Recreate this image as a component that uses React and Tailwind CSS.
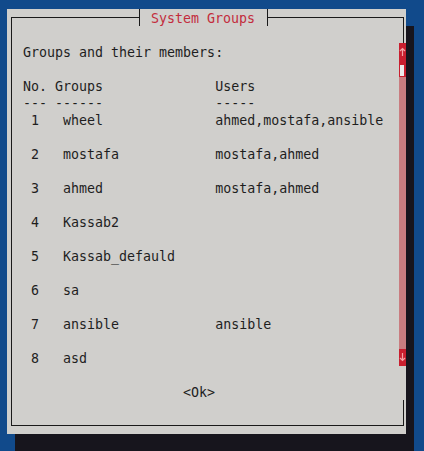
import React from "react";

const GROUPS = [
    { n: 1, name: "wheel", users: "ahmed,mostafa,ansible" },
    { n: 2, name: "mostafa", users: "mostafa,ahmed" },
    { n: 3, name: "ahmed", users: "mostafa,ahmed" },
    { n: 4, name: "Kassab2", users: "" },
    { n: 5, name: "Kassab_defauld", users: "" },
    { n: 6, name: "sa", users: "" },
    { n: 7, name: "ansible", users: "ansible" },
    { n: 8, name: "asd", users: "" },
];

// one terminal cell row = 17px tall, 8px per char
function Line({ children }) {
    return <div className="h-[17px] leading-[17px] whitespace-pre">{children}</div>;
}

function buildLines() {
    const lines = ["Groups and their members:", "", "No. Groups".padEnd(24) + "Users", "--- ------".padEnd(24) + "-----"];
    GROUPS.forEach((g, i) => {
        lines.push(` ${g.n}   ${g.name}`.padEnd(24) + g.users);
        if (i < GROUPS.length - 1) lines.push("");
    });
    return lines;
}

function Arrow({ down }) {
    return (
        <svg width="7" height="17" viewBox="0 0 7 17" className={down ? "rotate-180" : ""}>
            <path d="M3.5 5.5 V13 M1 8 L3.5 5.5 L6 8" fill="none" stroke="#f3a3a6" strokeWidth="1.2" />
        </svg>
    );
}

function ScrollBar() {
    return (
        <div className="absolute right-0 top-[34px] w-[7px] flex flex-col">
            {/* up arrow */}
            <div className="h-[17px] bg-[#c81f2f]">
                <Arrow />
            </div>
            {/* thumb */}
            <div className="h-[17px] bg-[#c81f2f] pt-[5px] px-[1px]">
                <div className="h-[11px] w-[4px] bg-[#ececec]" />
            </div>
            {/* track */}
            <div className="h-[272px] bg-[#c97d80]" />
            {/* down arrow */}
            <div className="h-[17px] bg-[#c81f2f]">
                <Arrow down />
            </div>
            {/* gap where the right border is hidden */}
            <div className="h-[34px] bg-[#d0cfcc]" />
        </div>
    );
}

export default function App() {
    const lines = buildLines();

    return (
        <div className="w-[424px] h-[451px] overflow-hidden bg-[#114a8b] pl-[7px] pt-[9px] font-['DejaVu_Sans_Mono',monospace] text-[13.3px] text-[#1e1e1e]">
            <div className="relative w-[399px] h-[425px] bg-[#d0cfcc] pl-[4px] pr-[2px] pt-[8px] pb-[8px] shadow-[8px_17px_0_0_#17151d]">
                <div className="h-full border border-[#1a1a1a] pl-[11px] pt-[26px] overflow-hidden">
                    {lines.map((l, i) => (
                        <Line key={i}>{l}</Line>
                    ))}
                    <Line>{" "}</Line>
                    <Line>{"                    <Ok>"}</Line>
                </div>

                {/* title over the top border */}
                <div className="absolute left-[132px] top-0 w-[129px] h-[17px] border-x border-[#1a1a1a] bg-[#d0cfcc] pl-[11px] leading-[19px] text-[#c32c3c] whitespace-pre">
                    System Groups
                </div>

                <ScrollBar />
            </div>
        </div>
    );
}
